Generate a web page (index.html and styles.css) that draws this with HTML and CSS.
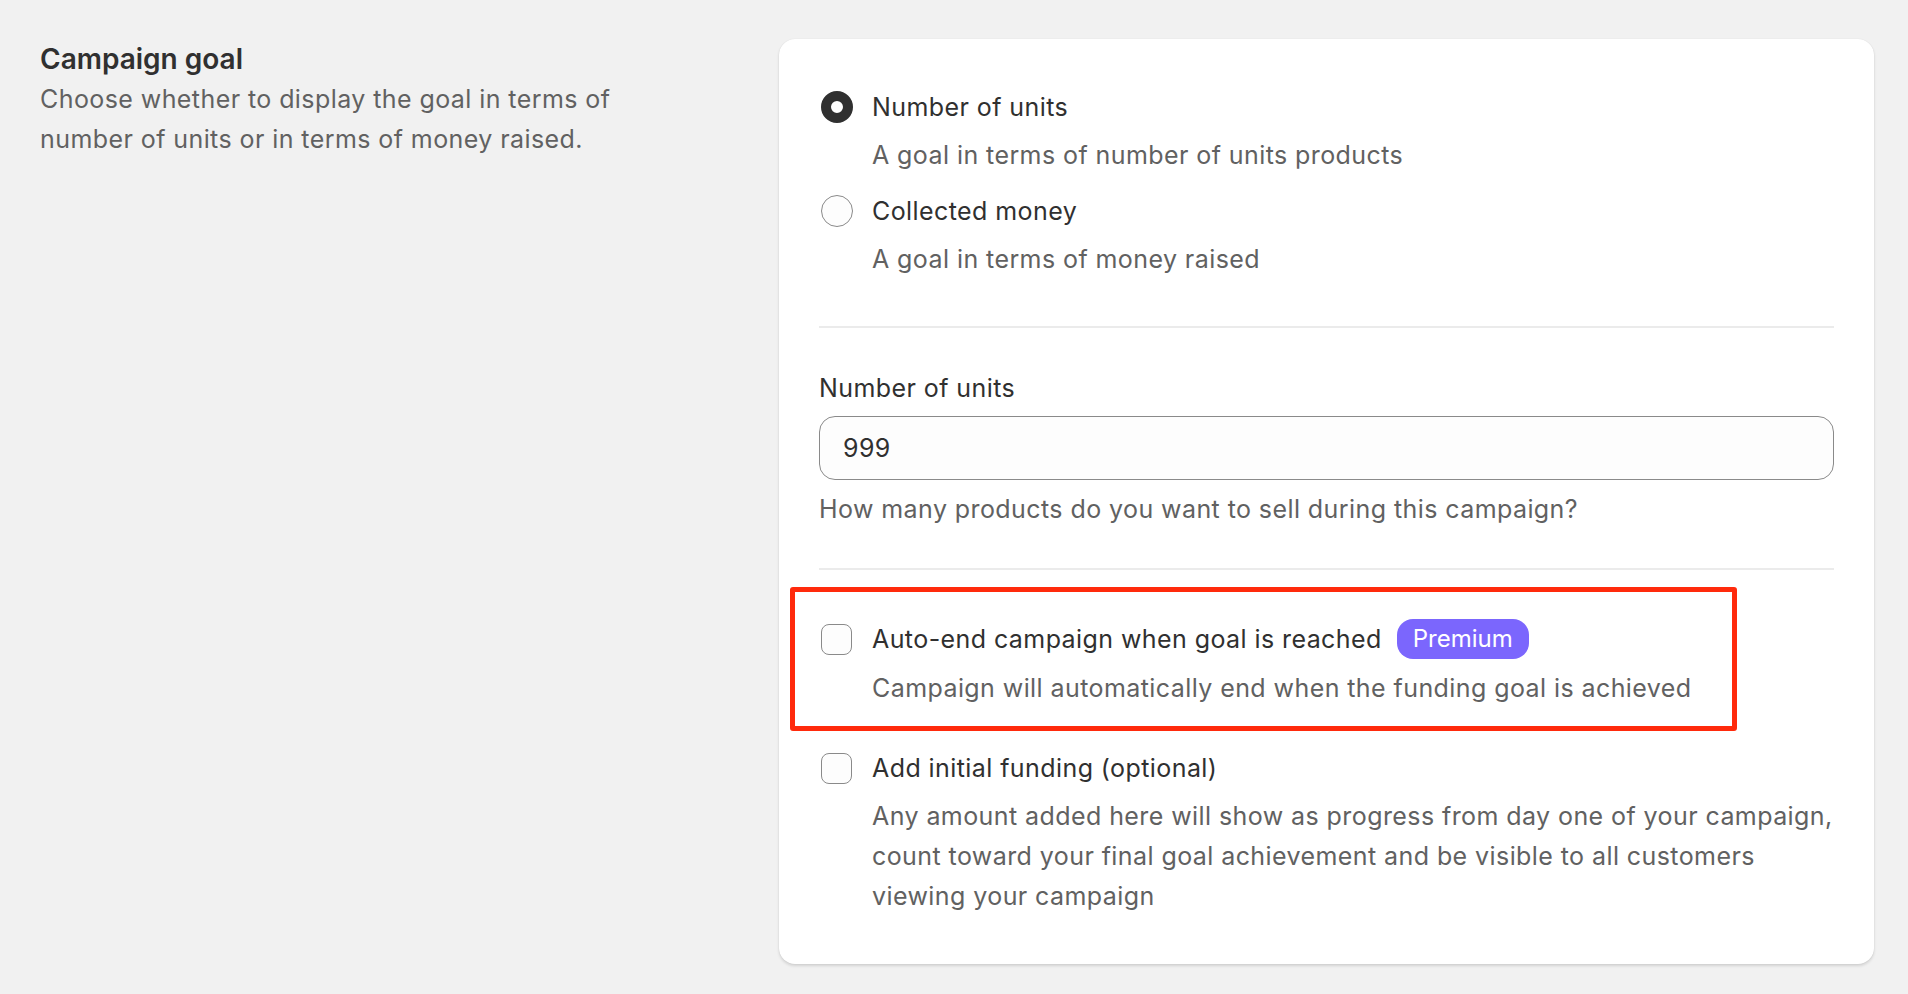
FILE: index.html
```html
<!DOCTYPE html>
<html lang="en">
<head>
<meta charset="utf-8">
<title>Campaign goal</title>
<link rel="stylesheet" href="styles.css">
</head>
<body>
<div class="page">
  <div class="annotation">
    <h2 class="annotation-title">Campaign goal</h2>
    <p class="annotation-text">Choose whether to display the goal in terms of number of units or in terms of money raised.</p>
  </div>
  <div class="card">
    <div class="section section-choices">
      <div class="choice">
        <div class="choice-row">
          <span class="control"><span class="radio radio-checked"></span></span>
          <span class="choice-label">Number of units</span>
        </div>
        <div class="choice-help">A goal in terms of number of units products</div>
      </div>
      <div class="choice">
        <div class="choice-row">
          <span class="control"><span class="radio"></span></span>
          <span class="choice-label">Collected money</span>
        </div>
        <div class="choice-help">A goal in terms of money raised</div>
      </div>
    </div>
    <div class="divider"></div>
    <div class="section section-field">
      <label class="field-label" for="units">Number of units</label>
      <input class="text-field" id="units" type="text" value="999">
      <div class="field-help">How many products do you want to sell during this campaign?</div>
    </div>
    <div class="divider"></div>
    <div class="section section-options">
      <div class="choice choice-marked">
        <div class="choice-row">
          <span class="control"><span class="checkbox"></span></span>
          <span class="choice-label">Auto-end campaign when goal is reached</span>
          <span class="badge">Premium</span>
        </div>
        <div class="choice-help">Campaign will automatically end when the funding goal is achieved</div>
        <div class="highlight"></div>
      </div>
      <div class="choice">
        <div class="choice-row">
          <span class="control"><span class="checkbox"></span></span>
          <span class="choice-label">Add initial funding (optional)</span>
        </div>
        <div class="choice-help">Any amount added here will show as progress from day one of your campaign, count toward your final goal achievement and be visible to all customers viewing your campaign</div>
      </div>
    </div>
  </div>
</div>
</body>
</html>
```

FILE: styles.css
```css
* {
  box-sizing: border-box;
}

html, body {
  margin: 0;
  padding: 0;
  background: #f1f1f1;
}

body {
  font-family: Inter, "Noto Sans", "Liberation Sans", sans-serif;
  font-size: 25px;
  letter-spacing: 0.42px;
  line-height: 40px;
  color: #303030;
}

.page {
  display: flex;
  gap: 40px;
  padding: 39px 34px 30px 40px;
  align-items: flex-start;
}

.annotation {
  flex: 0 0 699px;
}

.annotation-title {
  margin: 0;
  font-size: 28px;
  letter-spacing: 0;
  line-height: 40px;
  font-weight: 600;
  color: #303030;
}

.annotation-text {
  margin: 0;
  max-width: 640px;
  color: #616161;
}

.card {
  flex: 1;
  background: #ffffff;
  border-radius: 16px;
  padding: 0 40px;
  box-shadow: 0 2px 3px rgba(0, 0, 0, 0.13), 0 0 1px rgba(0, 0, 0, 0.12);
}

.divider {
  height: 2px;
  background: #ebebeb;
}

.section-choices {
  padding: 48px 0 47px;
  display: flex;
  flex-direction: column;
  gap: 16px;
}

.section-field {
  padding: 40px 0 39px;
  display: flex;
  flex-direction: column;
}

.section-options {
  padding: 49px 0 48px;
  display: flex;
  flex-direction: column;
  gap: 40px;
}

.choice {
  display: flex;
  flex-direction: column;
  gap: 8px;
}

.choice-marked {
  position: relative;
  gap: 9px;
}

.choice-row {
  display: flex;
  align-items: center;
  min-height: 40px;
}

.control {
  flex: 0 0 32px;
  height: 40px;
  margin-left: 2px;
  margin-right: 19px;
  display: flex;
  align-items: center;
}

.radio {
  width: 32px;
  height: 32px;
  border-radius: 50%;
  border: 1.5px solid #8a8a8a;
  background: #fdfdfd;
}

.radio-checked {
  border: 10px solid #303030;
  background: #ffffff;
}

.checkbox {
  width: 31px;
  height: 31px;
  border-radius: 8px;
  border: 1.5px solid #8a8a8a;
  background: #fdfdfd;
}

.choice-label {
  color: #303030;
}

.choice-help {
  padding-left: 53px;
  color: #616161;
}

.badge {
  margin-left: 15px;
  height: 40px;
  padding: 0 16px;
  border-radius: 16px;
  background: #7b66fd;
  color: #ffffff;
  font-size: 24px;
  letter-spacing: 0;
  display: inline-flex;
  align-items: center;
}

.highlight {
  position: absolute;
  top: -32px;
  left: -29px;
  right: 97px;
  bottom: -23px;
  border: 5px solid #ff2a0c;
  border-radius: 3px;
  pointer-events: none;
}

.field-label {
  color: #303030;
  line-height: 40px;
}

.text-field {
  margin-top: 8px;
  height: 64px;
  width: 100%;
  padding: 0 23px;
  border: 1.5px solid #8a8a8a;
  border-radius: 16px;
  background: #fdfdfd;
  font-family: inherit;
  font-size: 25px;
  letter-spacing: 0.42px;
  color: #303030;
  outline: none;
}

.field-help {
  margin-top: 9px;
  color: #616161;
}
```
